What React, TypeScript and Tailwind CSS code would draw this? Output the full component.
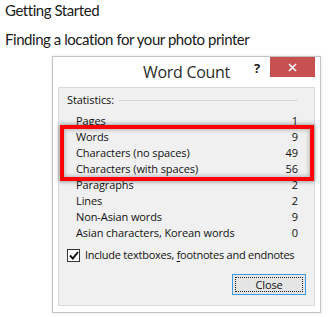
import React from 'react';

const stats: [string, string][] = [
  ['Pages', '1'],
  ['Words', '9'],
  ['Characters (no spaces)', '49'],
  ['Characters (with spaces)', '56'],
  ['Paragraphs', '2'],
  ['Lines', '2'],
  ['Non-Asian words', '9'],
  ['Asian characters, Korean words', '0'],
];

function Row({ label, value }: { label: string; value: string }) {
  return (
    <div className="flex h-4 items-center justify-between leading-4">
      <span>{label}</span>
      <span>{value}</span>
    </div>
  );
}

export default function App() {
  const dialogFont = { fontFamily: '"Open Sans", "Noto Sans", sans-serif' };

  return (
    <div className="relative h-[317px] w-[328px] overflow-hidden bg-white text-black">
      <div
        className="pl-[5px] pt-[1px] text-[15px] leading-[18px] tracking-[-0.45px] text-[#1a1a1a]"
        style={{ fontFamily: 'Lato, "Open Sans", sans-serif' }}
      >
        <p>Getting Started</p>
        <p className="mt-[11px]">Finding a location for your photo printer</p>
      </div>

      <div
        className="ml-[52px] mt-[8px] flex h-[257px] w-[269px] flex-col border border-[#c4c4c4] bg-white shadow-[0_0_3px_rgba(0,0,0,0.12)]"
        style={dialogFont}
      >
        {/* title bar */}
        <div className="relative flex h-[30px] items-start justify-center pt-[5px]">
          <span className="text-[16px] leading-5 tracking-[-0.3px] text-[#2b2b2b]">Word Count</span>
          <span className="absolute left-[201px] top-[5px] text-[13px] font-bold leading-none text-[#222]">?</span>
          <button className="absolute right-[5px] top-0 flex h-[20px] w-[45px] items-center justify-center bg-[#c75050]">
            <svg width="9" height="9" viewBox="0 0 9 9">
              <path d="M1 1 L8 8 M8 1 L1 8" stroke="white" strokeWidth="1.6" />
            </svg>
          </button>
        </div>

        {/* body */}
        <div className="relative mx-[5px] mb-[6px] flex flex-1 flex-col border border-[#dadada] bg-[#f0f0f0] pl-[8px] pr-[16px] pt-[4px] text-[11px] tracking-[-0.1px] text-[#111]">
          <div className="flex h-4 items-center gap-[5px] leading-4">
            <span>Statistics:</span>
            <span className="h-px flex-1 bg-[#d8d8d8]" />
          </div>

          <div className="mt-[5px] pl-[9px]">
            {stats.map(([l, v]) => (
              <Row key={l} label={l} value={v} />
            ))}
          </div>

          {/* highlight around words / characters */}
          <div className="pointer-events-none absolute left-[1px] top-[37px] h-[56px] w-[254px] border-4 border-[#ff0000] shadow-[0_0_4px_1px_rgba(0,0,0,0.35),inset_0_0_4px_1px_rgba(0,0,0,0.25)]" />

          <label className="-mr-[12px] mt-[6px] flex items-center gap-[5px] leading-4 tracking-[-0.25px]">
            <span className="flex h-[13px] w-[13px] shrink-0 items-center justify-center border border-[#333] bg-white">
              <svg width="10" height="9" viewBox="0 0 10 9">
                <path d="M1 4.5 L3.8 7.5 L9 1" fill="none" stroke="#111" strokeWidth="2" />
              </svg>
            </span>
            <span className="whitespace-nowrap">
              Include textboxes, <span className="underline underline-offset-2">f</span>ootnotes and endnotes
            </span>
          </label>

          <div className="mt-[11px] flex justify-end">
            <button className="-mr-[8px] flex h-[21px] w-[74px] items-center justify-center border border-[#3c9ae8] bg-[#e5e5e5] p-[2px]">
              <span className="flex h-full w-full items-center justify-center border border-dotted border-[#222] text-[11px] leading-none">
                Close
              </span>
            </button>
          </div>
        </div>
      </div>
    </div>
  );
}
